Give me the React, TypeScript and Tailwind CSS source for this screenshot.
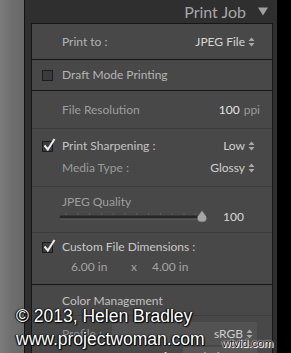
import React from "react";

const UpDown = () => (
  <svg width="7" height="10" viewBox="0 0 7 10" className="ml-[3px] shrink-0">
    <path d="M3.5 0.5 L6.5 4 L0.5 4 Z" fill="#a8a8a8" />
    <path d="M3.5 9.5 L6.5 6 L0.5 6 Z" fill="#a8a8a8" />
  </svg>
);

const Box = ({ checked }: { checked?: boolean }) => (
  <div className="relative w-[11px] h-[11px] border border-[#1c1c1c] bg-[#3b3b3b] shrink-0">
    {checked && (
      <svg width="14" height="14" viewBox="0 0 14 14" className="absolute left-[0px] top-[-4px]">
        <path d="M1.5 7.5 L4.8 11.5 L11.5 1" stroke="#ececec" strokeWidth="2" fill="none" />
      </svg>
    )}
  </div>
);

const Slider = () => {
  const ticks = [] as number[];
  for (let i = 0; i < 12; i++) ticks.push(7 + i * 11.8);
  return (
    <svg width="150" height="14" viewBox="0 0 150 14" className="shrink-0">
      {ticks.map((x, i) => (
        <line key={i} x1={x} y1="3" x2={x} y2="5" stroke="#5e5e5e" strokeWidth="1" />
      ))}
      <rect x="0.5" y="6" width="148" height="3.5" rx="1.75" fill="#6a6a6a" />
      <rect x="0.5" y="5.5" width="148" height="3" rx="1.5" fill="#262626" />
      <path d="M143 0.5 L147.5 6.5 Q148.5 12 143 12 Q137.5 12 138.5 6.5 Z" fill="#a6a6a6" stroke="#5a5a5a" strokeWidth="0.6" />
    </svg>
  );
};

export default function App() {
  return (
    <div
      className="relative w-[291px] h-[353px] overflow-hidden flex"
      style={{ fontFamily: "Lato, 'Open Sans', sans-serif" }}
    >
      <div className="w-[24px] bg-gradient-to-r from-[#7c7c7c] via-[#6e6e6e] to-[#686868]" />
      <div className="w-px bg-[#121212]" />
      <div className="w-[252px] bg-[#2f2f2f] flex flex-col pl-[6px] pr-[4px] overflow-hidden">
        <div className="h-[23px] shrink-0 flex items-center justify-end pr-[5px]">
          <span className="text-[16px] leading-none text-[#a6a6a6] mr-[12px]">Print Job</span>
          <svg width="10" height="9" viewBox="0 0 10 9">
            <path d="M0 0.5 L10 0.5 L5 8.5 Z" fill="#a0a0a0" />
          </svg>
        </div>
        <div className="flex-1 min-h-0 overflow-hidden border border-b-0 border-[#161616] bg-[#484848] text-[12px]">
          {/* Print to */}
          <div className="h-[36px] border-b border-[#161616] flex items-center justify-between pl-[30px] pr-[17px]">
            <span className="text-[#b4b4b4]">Print to :</span>
            <span className="flex items-center text-[#d6d6d6]">
              JPEG File
              <UpDown />
            </span>
          </div>
          {/* Draft */}
          <div className="h-[31px] border-b border-[#161616] flex items-center pl-[10px]">
            <Box />
            <span className="ml-[9px] text-[#b4b4b4]">Draft Mode Printing</span>
          </div>
          {/* File resolution */}
          <div className="h-[38px] border-b border-[#3c3c3c] flex items-center justify-between pl-[30px] pr-[12px]">
            <span className="text-[#9e9e9e]">File Resolution</span>
            <span>
              <span className="text-[#e2e2e2]">100</span>
              <span className="text-[#9a9a9a] ml-[4px]">ppi</span>
            </span>
          </div>
          {/* Sharpening */}
          <div className="h-[58px] border-b border-[#3c3c3c] pt-[6px]">
            <div className="h-[22px] flex items-center justify-between pl-[10px] pr-[17px]">
              <span className="flex items-center">
                <Box checked />
                <span className="ml-[9px] text-[#c4c4c4]">Print Sharpening :</span>
              </span>
              <span className="flex items-center text-[#cfcfcf]">
                Low
                <UpDown />
              </span>
            </div>
            <div className="h-[22px] flex items-center justify-between pl-[30px] pr-[17px]">
              <span className="text-[#9c9c9c]">Media Type :</span>
              <span className="flex items-center text-[#cfcfcf]">
                Glossy
                <UpDown />
              </span>
            </div>
          </div>
          {/* JPEG Quality */}
          <div className="h-[46px] border-b border-[#3c3c3c] pt-[7px]">
            <div className="h-[16px] leading-[16px] pl-[30px] text-[#9e9e9e]">JPEG Quality</div>
            <div className="h-[14px] flex items-center pl-[27px]">
              <Slider />
              <span className="ml-[14px] text-[#d8d8d8]">100</span>
            </div>
          </div>
          {/* Custom dims */}
          <div className="h-[52px] border-b border-[#161616] pt-[4px]">
            <div className="h-[20px] flex items-center pl-[10px]">
              <Box checked />
              <span className="ml-[9px] text-[#c8c8c8]">Custom File Dimensions :</span>
            </div>
            <div className="mt-[2px] h-[16px] flex items-center pl-[39px] text-[#a4a4a4]">
              <span className="w-[60px]">6.00 in</span>
              <span className="w-[21px]">x</span>
              <span>4.00 in</span>
            </div>
          </div>
          {/* Color management */}
          <div className="pt-[8px]">
            <div className="h-[16px] leading-[16px] pl-[30px] text-[#c0c0c0]">Color Management</div>
            <div className="mt-[6px] h-px bg-[#3e3e3e]" />
            <div className="mt-[6px] h-[23px] flex items-center pl-[30px] pr-[15px]">
              <span className="w-[50px] text-[#8e8e8e]">Profile :</span>
              <div className="flex-1 h-full bg-[#525252] flex items-center justify-end pr-[4px] text-[#cfcfcf]">
                sRGB
                <UpDown />
              </div>
            </div>
            <div className="mt-[2px] h-[20px] flex items-center pl-[30px] pr-[15px]">
              <span className="w-[48px] text-[#8e8e8e]">Intent :</span>
              <span className="w-[73px] text-[#e6e6e6] font-bold">Perceptual</span>
              <div className="flex-1 h-full bg-[#565656] flex items-center pl-[7px] text-[#bdbdbd]">Relative</div>
            </div>
          </div>
        </div>
      </div>
      <div className="flex-1 bg-black" />

      {/* watermark */}
      <div
        className="absolute left-[16px] top-[305px] text-white text-[17.5px] leading-[23px] whitespace-nowrap [text-shadow:1px_1px_1px_#000,0_0_2px_#000,-1px_0_1px_#000]"
        style={{ fontFamily: "'Liberation Sans', Arial, sans-serif" }}
      >
        <div>© 2013, Helen Bradley</div>
        <div>www.projectwoman.com</div>
      </div>
      <div
        className="absolute left-[222px] top-[337px] text-[11.5px] leading-[13px] text-[#111] whitespace-nowrap [text-shadow:0_0_2px_#fff,0_0_1px_#fff,1px_1px_0_#fff]"
        style={{ fontFamily: "'Liberation Sans', Arial, sans-serif" }}
      >
        wtvid.com
      </div>
    </div>
  );
}
